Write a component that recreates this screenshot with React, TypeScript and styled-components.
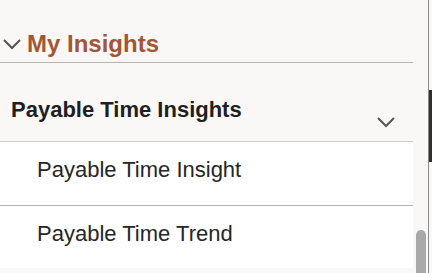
import React from 'react';
import styled, { createGlobalStyle } from 'styled-components';

const GlobalStyle = createGlobalStyle`
  html, body {
    margin: 0;
    padding: 0;
    background: #f9f8f6;
    font-family: "Liberation Sans", Arial, sans-serif;
  }
`;

const items = ['Payable Time Insight', 'Payable Time Trend'];

const Chevron: React.FC = () => (
  <ChevronSvg viewBox="0 0 18 18" aria-hidden="true">
    <polyline points="1,5 9,13 17,5" />
  </ChevronSvg>
);

const App: React.FC = () => (
  <>
    <GlobalStyle />
    <Page>
      <Panel>
        <Header>
          <Chevron />
          <Title>My Insights</Title>
        </Header>
        <GroupHeader>
          <GroupTitle>Payable Time Insights</GroupTitle>
          <GroupToggle>
            <Chevron />
          </GroupToggle>
        </GroupHeader>
        <ItemList>
          {items.map((label) => (
            <Item key={label}>{label}</Item>
          ))}
        </ItemList>
      </Panel>
      <Track>
        <Thumb />
      </Track>
      <Edge>
        <EdgeBar />
      </Edge>
    </Page>
  </>
);

const Page = styled.div`
  display: flex;
  height: 273px;
  overflow: hidden;
`;

const Panel = styled.div`
  width: 413px;
  flex-shrink: 0;
  display: flex;
  flex-direction: column;
`;

const Header = styled.div`
  display: flex;
  align-items: center;
  gap: 6px;
  height: 63px;
  box-sizing: border-box;
  padding: 32px 0 7px 3px;
  border-bottom: 1px solid #b9b4ab;
`;

const ChevronSvg = styled.svg`
  width: 18px;
  height: 18px;
  flex-shrink: 0;
  fill: none;
  stroke: #555555;
  stroke-width: 2;
`;

const Title = styled.h2`
  margin: 0;
  font-size: 24px;
  line-height: 24px;
  font-weight: bold;
  color: #a35634;
`;

const GroupHeader = styled.div`
  display: flex;
  justify-content: space-between;
  height: 78px;
  box-sizing: border-box;
  padding: 36px 18px 0 11px;
`;

const GroupTitle = styled.h3`
  margin: 0;
  font-size: 22px;
  line-height: 22px;
  font-weight: bold;
  color: #1f1f1f;
`;

const GroupToggle = styled.div`
  margin-top: 14px;
  display: flex;
`;

const ItemList = styled.div`
  background: #ffffff;
  border-top: 1px solid #cbcbcb;
`;

const Item = styled.div`
  height: 63px;
  box-sizing: border-box;
  padding: 17px 0 0 37px;
  font-size: 22px;
  line-height: 22px;
  color: #262626;

  & + & {
    border-top: 1px solid #b8b3aa;
  }
`;

const Track = styled.div`
  width: 15px;
  flex-shrink: 0;
  display: flex;
  flex-direction: column;
  padding-top: 230px;
  box-sizing: border-box;
`;

const Thumb = styled.div`
  flex: 1;
  width: 10px;
  margin-left: 3px;
  background: #a9a9a9;
  border-radius: 5px 5px 0 0;
`;

const Edge = styled.div`
  width: 4px;
  flex-shrink: 0;
  border-left: 1px solid #8a8a8a;
  box-sizing: border-box;
`;

const EdgeBar = styled.div`
  margin-top: 90px;
  height: 72px;
  background: #2f2f2f;
`;

export default App;
